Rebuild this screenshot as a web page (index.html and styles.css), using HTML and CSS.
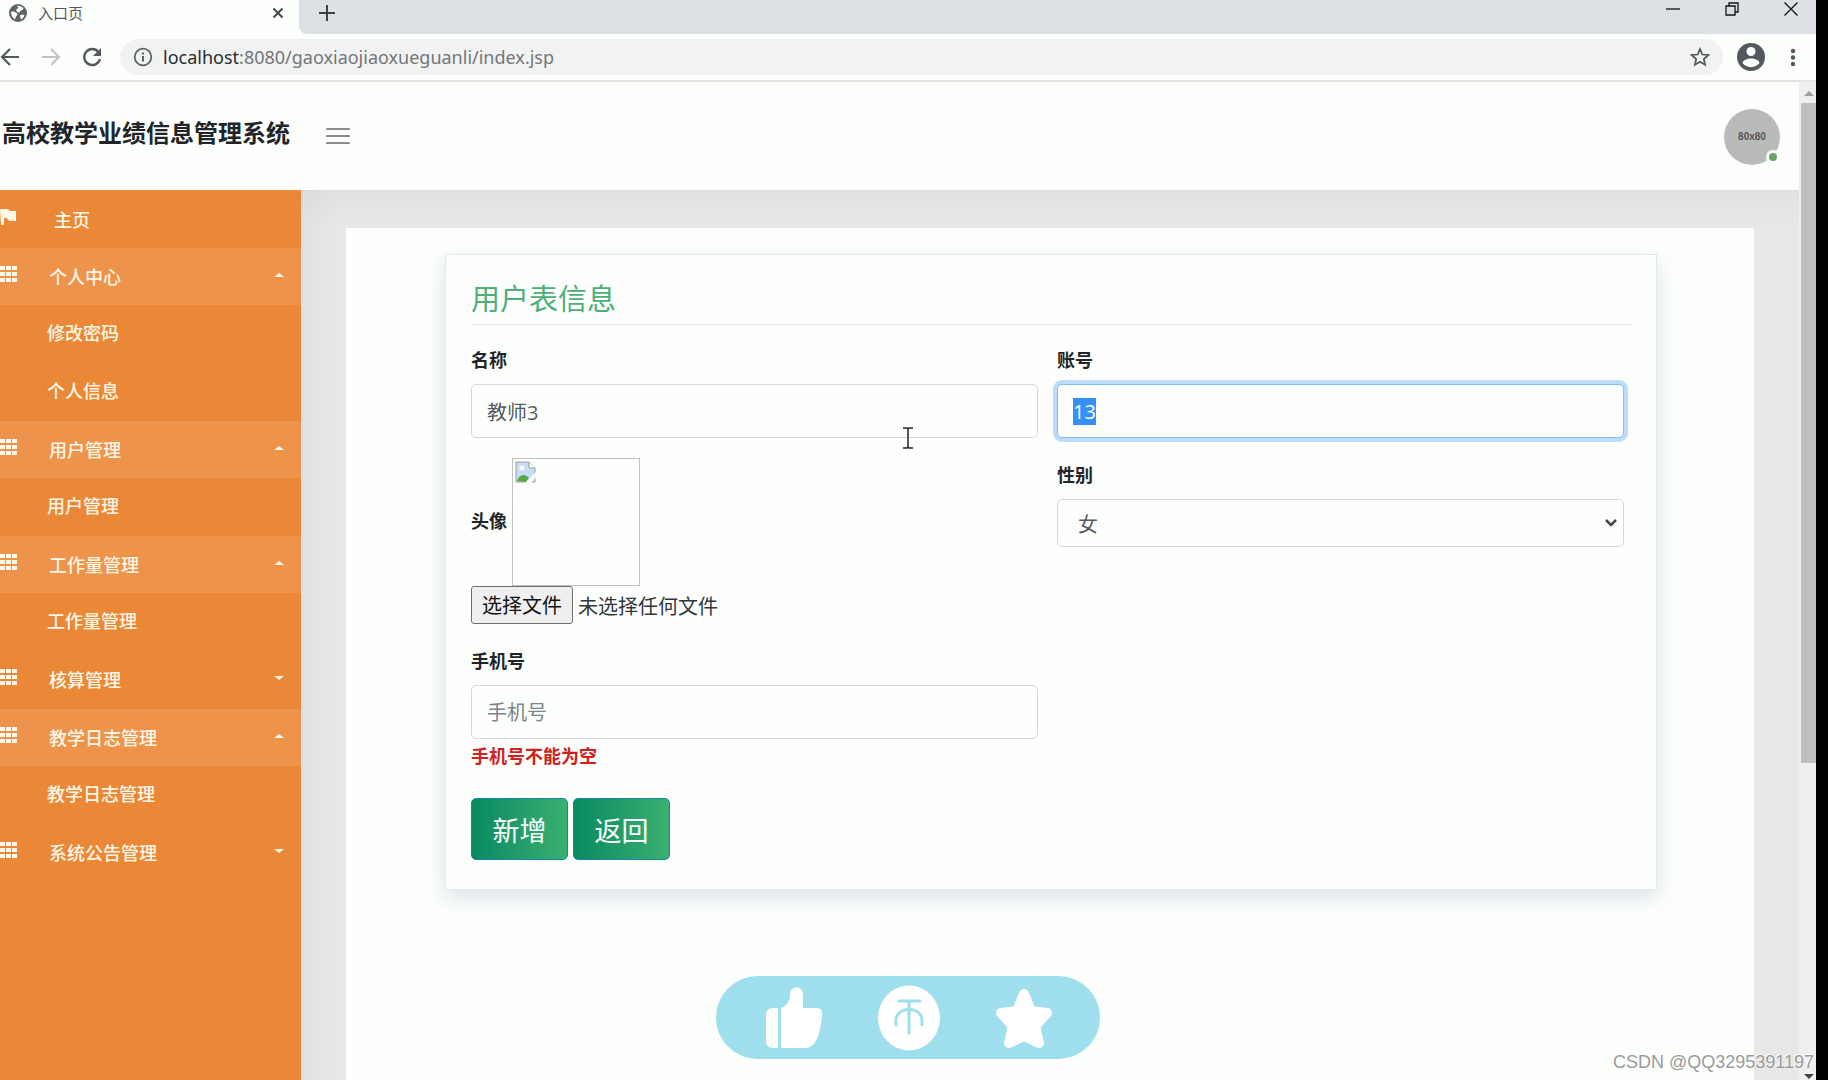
FILE: index.html
```html
<!DOCTYPE html>
<html lang="zh-CN">
<head>
<meta charset="utf-8">
<meta name="viewport" content="width=device-width, initial-scale=1">
<title>入口页</title>
<link rel="stylesheet" href="styles.css">
</head>
<body>
<svg class="sprite" aria-hidden="true">
  <symbol id="grid" viewBox="0 0 17 16">
    <path d="M0 0h5v4H0zM6 0h5v4H6zM12 0h5v4h-5zM0 6h5v4H0zM6 6h5v4H6zM12 6h5v4h-5zM0 12h5v4H0zM6 12h5v4H6zM12 12h5v4h-5z"/>
  </symbol>
</svg>
<div class="window">
  <div class="tabstrip">
    <div class="tab">
      <svg class="favicon" viewBox="0 0 18 18"><circle cx="9" cy="9" r="9" fill="#5f6368"/><path d="M2 8c2-1 4 0 5.500 1s1 2 0 3-1 2-1.500 3.500C3.500 14 2 11 2 8zM8 2c3-.5 5 .5 6.500 2.500-1 2-1 1-2.500 2s-1 2.500-2.500 2S6 6 8 5s1-2 0-3zM11.500 11c1.500-1 3-.5 4 0-.5 2-2 3.500-3.500 4.500-.5-2-1.500-3-.5-4.500z" fill="#fdfffd"/></svg>
      <span class="tab-title">入口页</span>
      <button class="bare" aria-label="关闭标签页"><svg width="12" height="12" viewBox="0 0 12 12"><path d="M1.500 1.500l9 9M10.500 1.500l-9 9" stroke="#45484c" stroke-width="2"/></svg></button>
    </div>
    <div class="strip-rest">
      <button class="bare" aria-label="新标签页"><svg width="16" height="16" viewBox="0 0 16 16"><path d="M8 0v16M0 8h16" stroke="#3c4043" stroke-width="2"/></svg></button>
      <div class="window-buttons">
        <button class="bare" aria-label="最小化"><svg width="14" height="14" viewBox="0 0 14 14"><path d="M0 7h14" stroke="#111" stroke-width="1.300"/></svg></button>
        <button class="bare" aria-label="还原"><svg width="14" height="14" viewBox="0 0 14 14"><path d="M1 4h9v9H1zM4 4V1h9v9h-3" fill="none" stroke="#111" stroke-width="1.300"/></svg></button>
        <button class="bare" aria-label="关闭"><svg width="14" height="14" viewBox="0 0 14 14"><path d="M.5.5l13 13M13.500.5l-13 13" stroke="#111" stroke-width="1.300"/></svg></button>
      </div>
    </div>
  </div>

  <div class="toolbar">
    <button class="bare nav" aria-label="后退"><svg width="20" height="20" viewBox="0 0 20 20"><path d="M19 10H2M10 2l-8 8 8 8" fill="none" stroke="#55585c" stroke-width="2.200"/></svg></button>
    <button class="bare nav" aria-label="前进"><svg width="20" height="20" viewBox="0 0 20 20"><path d="M1 10h17M10 2l8 8-8 8" fill="none" stroke="#c0c2c4" stroke-width="2.200"/></svg></button>
    <button class="bare nav" aria-label="刷新"><svg width="20" height="20" viewBox="0 0 20 20"><path d="M16.500 5A8 8 0 1 0 18 12" fill="none" stroke="#55585c" stroke-width="2.400"/><path d="M19 1v8h-8z" fill="#55585c"/></svg></button>
    <div class="address">
      <svg width="20" height="20" viewBox="0 0 20 20"><circle cx="10" cy="10" r="8.300" fill="none" stroke="#5f6368" stroke-width="1.800"/><path d="M10 9v5.500M10 5.500v2" stroke="#5f6368" stroke-width="2"/></svg>
      <span class="url"><span class="host">localhost</span>:8080/gaoxiaojiaoxueguanli/index.jsp</span>
      <button class="bare" aria-label="加入书签"><svg width="20" height="20" viewBox="0 0 20 20"><path d="M10 2l2.300 5.500 6 .5-4.500 4 1.300 5.800L10 14.700l-5.100 3.100L6.200 12 1.700 8l6-.5z" fill="none" stroke="#55585c" stroke-width="1.700"/></svg></button>
    </div>
    <button class="bare profile" aria-label="用户"><svg width="28" height="28" viewBox="0 0 28 28"><circle cx="14" cy="14" r="14" fill="#55585c"/><circle cx="14" cy="8.500" r="4.500" fill="#fdfffd"/><path d="M5.500 20c1-6 16-6 17 0-4 5.500-13 5.500-17 0z" fill="#fdfffd"/></svg></button>
    <button class="bare" aria-label="菜单"><svg width="6" height="20" viewBox="0 0 6 20"><g fill="#55585c"><circle cx="3" cy="4" r="2.200"/><circle cx="3" cy="10.500" r="2.200"/><circle cx="3" cy="17" r="2.200"/></g></svg></button>
  </div>

  <div class="viewport">
    <div class="page">
      <header class="header">
        <h1 class="brand">高校教学业绩信息管理系统</h1>
        <button class="bare" aria-label="折叠菜单"><svg width="24" height="18" viewBox="0 0 24 18"><path d="M1 2h22M1 9h22M1 16h22" stroke="#8b8d8b" stroke-width="2.200" stroke-linecap="round"/></svg></button>
        <div class="avatar">80x80<span class="online"></span></div>
      </header>

      <div class="body">
        <nav class="sidebar">
          <a class="item home" href="#"><svg class="icon" viewBox="0 0 17 16"><path d="M0 0h8q1 2 3 2h5v10h-6q-2 0-3-3H4v7H1z"/></svg><span>主页</span></a>
          <a class="item open" href="#"><svg class="icon"><use href="#grid"/></svg><span>个人中心</span><i class="caret"></i></a>
          <a class="sub" href="#">修改密码</a>
          <a class="sub" href="#">个人信息</a>
          <a class="item open" href="#"><svg class="icon"><use href="#grid"/></svg><span>用户管理</span><i class="caret"></i></a>
          <a class="sub" href="#">用户管理</a>
          <a class="item open" href="#"><svg class="icon"><use href="#grid"/></svg><span>工作量管理</span><i class="caret"></i></a>
          <a class="sub" href="#">工作量管理</a>
          <a class="item" href="#"><svg class="icon"><use href="#grid"/></svg><span>核算管理</span><i class="caret"></i></a>
          <a class="item open" href="#"><svg class="icon"><use href="#grid"/></svg><span>教学日志管理</span><i class="caret"></i></a>
          <a class="sub" href="#">教学日志管理</a>
          <a class="item" href="#"><svg class="icon"><use href="#grid"/></svg><span>系统公告管理</span><i class="caret"></i></a>
        </nav>

        <main class="main">
          <div class="panel">
            <form class="card">
              <h2 class="card-title">用户表信息</h2>
              <div class="fields">
                <div class="field">
                  <label for="name">名称</label>
                  <input class="control" id="name" type="text" value="教师3">
                </div>
                <div class="field">
                  <label for="account">账号</label>
                  <input class="control" id="account" type="text" value="13">
                </div>
                <div class="field">
                  <div class="photo-row">
                    <label for="photo">头像</label>
                    <div class="photo"><svg width="22" height="22" viewBox="0 0 22 22"><path d="M1 1h13l6 6v14H1z" fill="#c9dcf5" stroke="#9a9c9e"/><path d="M14 1v6h6" fill="#fff" stroke="#9a9c9e"/><circle cx="7" cy="7" r="2.500" fill="#fff"/><path d="M2 20c2-7 8-8 12-3l-3 4z" fill="#57a846"/><path d="M10 22L21 11v5l-5 6z" fill="#fff"/></svg></div>
                  </div>
                  <div class="file">
                    <input class="file-input" id="photo" type="file">
                    <label class="file-button" for="photo">选择文件</label>
                    <span>未选择任何文件</span>
                  </div>
                </div>
                <div class="field">
                  <label for="gender">性别</label>
                  <div class="select">
                    <select class="control" id="gender"><option>女</option><option>男</option></select>
                    <svg class="chevron" width="12" height="10" viewBox="0 0 12 10"><path d="M1 2l5 5 5-5" fill="none" stroke="#444" stroke-width="2.500"/></svg>
                  </div>
                </div>
                <div class="field">
                  <label for="phone">手机号</label>
                  <input class="control" id="phone" type="text" placeholder="手机号">
                  <p class="error">手机号不能为空</p>
                </div>
              </div>
              <div class="actions">
                <button class="btn" type="button">新增</button>
                <button class="btn" type="button">返回</button>
              </div>
            </form>
          </div>
        </main>
      </div>
    </div>
    <div class="scrollbar">
      <i class="arrow up"></i>
      <div class="track"><div class="thumb"></div></div>
      <i class="arrow down"></i>
    </div>
  </div>

  <svg class="ibeam" width="10" height="22" viewBox="0 0 10 22"><path d="M0 1h4l1 1 1-1h4M5 2v18M0 21h4l1-1 1 1h4" fill="none" stroke="#222" stroke-width="1.500"/></svg>

  <div class="reactions">
    <svg width="58" height="62" viewBox="0 0 58 62" fill="#fff"><path d="M8 21h5v40H8q-7 0-7-7V28q0-7 7-7zM16 21c6-2 9-8 9-14 0-9 13-9 13 0v14h13q7 0 6 7-1 15-5 24-4 9-12 9H16z"/></svg>
    <svg width="62" height="66" viewBox="0 0 62 66"><ellipse cx="31" cy="33" rx="31" ry="32.500" fill="#fff"/><path d="M21 16h21M31 16v32M18 40v-5c0-14 26-14 26 0v5" fill="none" stroke="#9edeed" stroke-width="3" stroke-linecap="round"/></svg>
    <svg width="58" height="62" viewBox="0 0 58 62"><path d="M29 7l7 17 16 2-12 13 4 17-15-7-15 7 4-17L6 26l16-2z" fill="#fff" stroke="#fff" stroke-width="10" stroke-linejoin="round"/></svg>
  </div>
  <div class="watermark">CSDN @QQ3295391197</div>
</div>
<div class="bezel"></div>
<script src="script.js"></script>
</body>
</html>
```
FILE: styles.css
```css
* { box-sizing: border-box; }

body {
  margin: 0;
  display: flex;
  height: 100vh;
  overflow: hidden;
  background: #fdfffd;
  font-family: "Open Sans", "Noto Sans CJK SC", sans-serif;
  font-size: 20px;
  color: #212529;
}

.sprite { position: absolute; width: 0; height: 0; }
svg { display: block; flex: none; }
a { color: inherit; text-decoration: none; }

.bare {
  display: flex;
  flex: none;
  padding: 0;
  border: 0;
  background: none;
}

.window {
  position: relative;
  flex: 1;
  min-width: 0;
  display: flex;
  flex-direction: column;
}
.bezel { width: 12px; background: #000; }

/* Browser chrome */
.tabstrip { display: flex; height: 34px; background: #fdfffd; }
.tab {
  display: flex;
  align-items: center;
  width: 299px;
  padding: 0 15px 8px 9px;
}
.favicon { width: 18px; height: 18px; }
.tab-title {
  flex: 1;
  margin-left: 11px;
  font-family: "Noto Sans CJK SC", sans-serif;
  font-size: 15px;
  line-height: 24px;
  color: #55585c;
}
.strip-rest {
  flex: 1;
  display: flex;
  justify-content: space-between;
  padding: 5px 18px 0 20px;
  background: #dde0e4;
  border-bottom-left-radius: 8px;
}
.window-buttons { display: flex; gap: 45px; margin-top: -3px; }

.toolbar {
  display: flex;
  align-items: center;
  height: 48px;
  padding: 0 20px 0 0;
  border-bottom: 2px solid #e3e3e0;
}
.nav { margin-right: 21px; }
.address {
  flex: 1;
  display: flex;
  align-items: center;
  height: 36px;
  margin: 0 14px 0 -3px;
  padding: 0 13px;
  border-radius: 18px;
  background: #f1f3f3;
}
.url {
  flex: 1;
  margin-left: 10px;
  font-family: "Noto Sans", sans-serif;
  font-size: 18px;
  line-height: 26px;
  color: #73767a;
}
.host { color: #2b2d30; }
.profile { margin-right: 25px; }

.viewport { flex: 1; min-height: 0; display: flex; }
.scrollbar {
  width: 17px;
  display: flex;
  flex-direction: column;
  align-items: center;
  padding: 9px 0 1px 2px;
  background: #efefef;
}
.track { flex: 1; width: 100%; padding-top: 7px; }
.thumb { height: 68%; background: #bfbfbf; }
.arrow { border: 5px solid transparent; }
.up { border-top: 0; border-bottom-color: #a0a0a0; }
.down { border-bottom: 0; border-top-color: #444; }

/* Page header */
.page { flex: 1; min-width: 0; display: flex; flex-direction: column; }
.header {
  display: flex;
  align-items: center;
  height: 108px;
  padding: 0 19px 0 2px;
}
.brand {
  width: 324px;
  margin: 0;
  padding-bottom: 8px;
  font-family: "Noto Sans CJK SC", sans-serif;
  font-size: 24px;
  line-height: 36px;
  font-weight: 700;
}
.avatar {
  position: relative;
  width: 56px;
  height: 56px;
  margin: 2px 0 0 auto;
  border-radius: 50%;
  background: #b9bbb9;
  font-family: "Liberation Sans", sans-serif;
  font-size: 10px;
  font-weight: 700;
  line-height: 56px;
  text-align: center;
  color: #555;
}
.online {
  position: absolute;
  right: 0;
  bottom: 1px;
  width: 14px;
  height: 14px;
  border: 3px solid #fdfffd;
  border-radius: 50%;
  background: #6aa468;
}

/* Sidebar */
.body { flex: 1; min-height: 0; display: flex; }
.sidebar {
  width: 301px;
  flex: none;
  background: #eb8837;
  font-family: "Noto Sans CJK SC", sans-serif;
  font-size: 18px;
  font-weight: 500;
  color: #fff8e6;
}
.item {
  display: flex;
  align-items: center;
  height: 58px;
  padding: 0 17px 2px 0;
}
.item span { flex: 1; margin-left: 32px; }
.home span { margin-left: 37px; }
.open { height: 57px; background: #ee934c; }
.home { padding-bottom: 0; }
.icon { width: 17px; height: 16px; margin-bottom: 4px; fill: currentColor; }
.caret {
  border: 5px solid transparent;
  border-top: 4px solid currentColor;
  border-bottom: 0;
  margin-bottom: 2px;
}
.open .caret { border-top: 0; border-bottom: 4px solid currentColor; }
.sub { display: block; height: 58px; padding-left: 47px; line-height: 55px; }

/* Content */
.main {
  flex: 1;
  min-width: 0;
  display: flex;
  padding: 38px 45px 0;
  background:
    linear-gradient(to bottom, rgba(0, 0, 0, .03), transparent 38px),
    linear-gradient(to right, rgba(0, 0, 0, .03), transparent 38px),
    #e7e9e7;
}
.panel { flex: 1; padding: 26px 97px 0 99px; background: #fdfffd; }
.card {
  padding: 22px 25px 29px;
  border: 1px solid #e3e8ea;
  background: #fdfffd;
  box-shadow: 0 8px 20px rgba(80, 105, 140, .2);
}
.card-title {
  margin: 0 0 18px;
  padding-bottom: 7px;
  border-bottom: 1px solid #e9ebe9;
  font-family: "Noto Sans CJK SC", sans-serif;
  font-size: 29px;
  font-weight: 400;
  line-height: 40px;
  color: #4eae78;
}
.fields {
  display: grid;
  grid-template-columns: 1fr 1fr;
  gap: 20px 19px;
  padding-right: 7px;
}
.field label, .error {
  display: block;
  font-family: "Noto Sans CJK SC", sans-serif;
  font-size: 18px;
  font-weight: 700;
  line-height: 32px;
}
.field > label { margin-bottom: 9px; }
.control {
  display: block;
  width: 100%;
  height: 54px;
  padding: 0 15px;
  border: 1px solid #d5d8d6;
  border-radius: 5px;
  outline: 0;
  background: #fdfffd;
  font: inherit;
  color: #55595d;
}
.control::placeholder { color: #7b848c; opacity: 1; }
.control:focus { border-color: #80bdff; box-shadow: 0 0 0 4px #bcdcfb; }
.control::selection { background: rgba(51, 144, 250, .99); color: #fff; }
.select { position: relative; }
.select .control { height: 48px; padding: 2px 20px 0; appearance: none; }
.chevron { position: absolute; right: 7px; top: 19px; pointer-events: none; }

.photo-row { display: flex; align-items: center; gap: 5px; }
.photo-row label { padding-bottom: 4px; }
.photo { width: 128px; height: 128px; padding: 2px; border: 1px solid #bfc1bf; }
.file { position: relative; display: flex; align-items: center; gap: 5px; color: #33373a; }
.file-input { position: absolute; width: 100%; height: 100%; margin: 0; opacity: 0; }
.field .file-button {
  height: 38px;
  padding: 0 10px;
  border: 1px solid #6f6f6f;
  border-radius: 3px;
  background: #efefef;
  font-size: 20px;
  font-weight: 400;
  line-height: 36px;
  color: #111;
}
.error { margin: 0; color: #d02020; }

.actions { display: flex; gap: 5px; margin-top: 27px; }
.btn {
  width: 97px;
  height: 62px;
  padding: 0;
  border: 1px solid #1488a8;
  border-radius: 5px;
  background: linear-gradient(to right, #0a8a62, #3ab070);
  font-family: "Noto Sans CJK SC", sans-serif;
  font-size: 27px;
  color: #fdfffd;
}

/* Overlays */
.ibeam { position: absolute; left: 50%; top: 427px; transform: translateX(-50%); }
.reactions {
  position: absolute;
  left: 50%;
  bottom: 21px;
  width: 384px;
  height: 83px;
  transform: translateX(-50%);
  display: flex;
  align-items: center;
  justify-content: space-between;
  padding: 0 47px 0 49px;
  border-radius: 42px;
  background: #9edeed;
}
.watermark {
  position: absolute;
  right: 2px;
  bottom: 6px;
  font-family: "Liberation Sans", sans-serif;
  font-size: 18px;
  line-height: 24px;
  color: #9a9c9a;
  text-shadow: -1px -1px #fff;
}
```
FILE: script.js
```js
const account = document.getElementById("account");
account.focus();
account.select();
```
